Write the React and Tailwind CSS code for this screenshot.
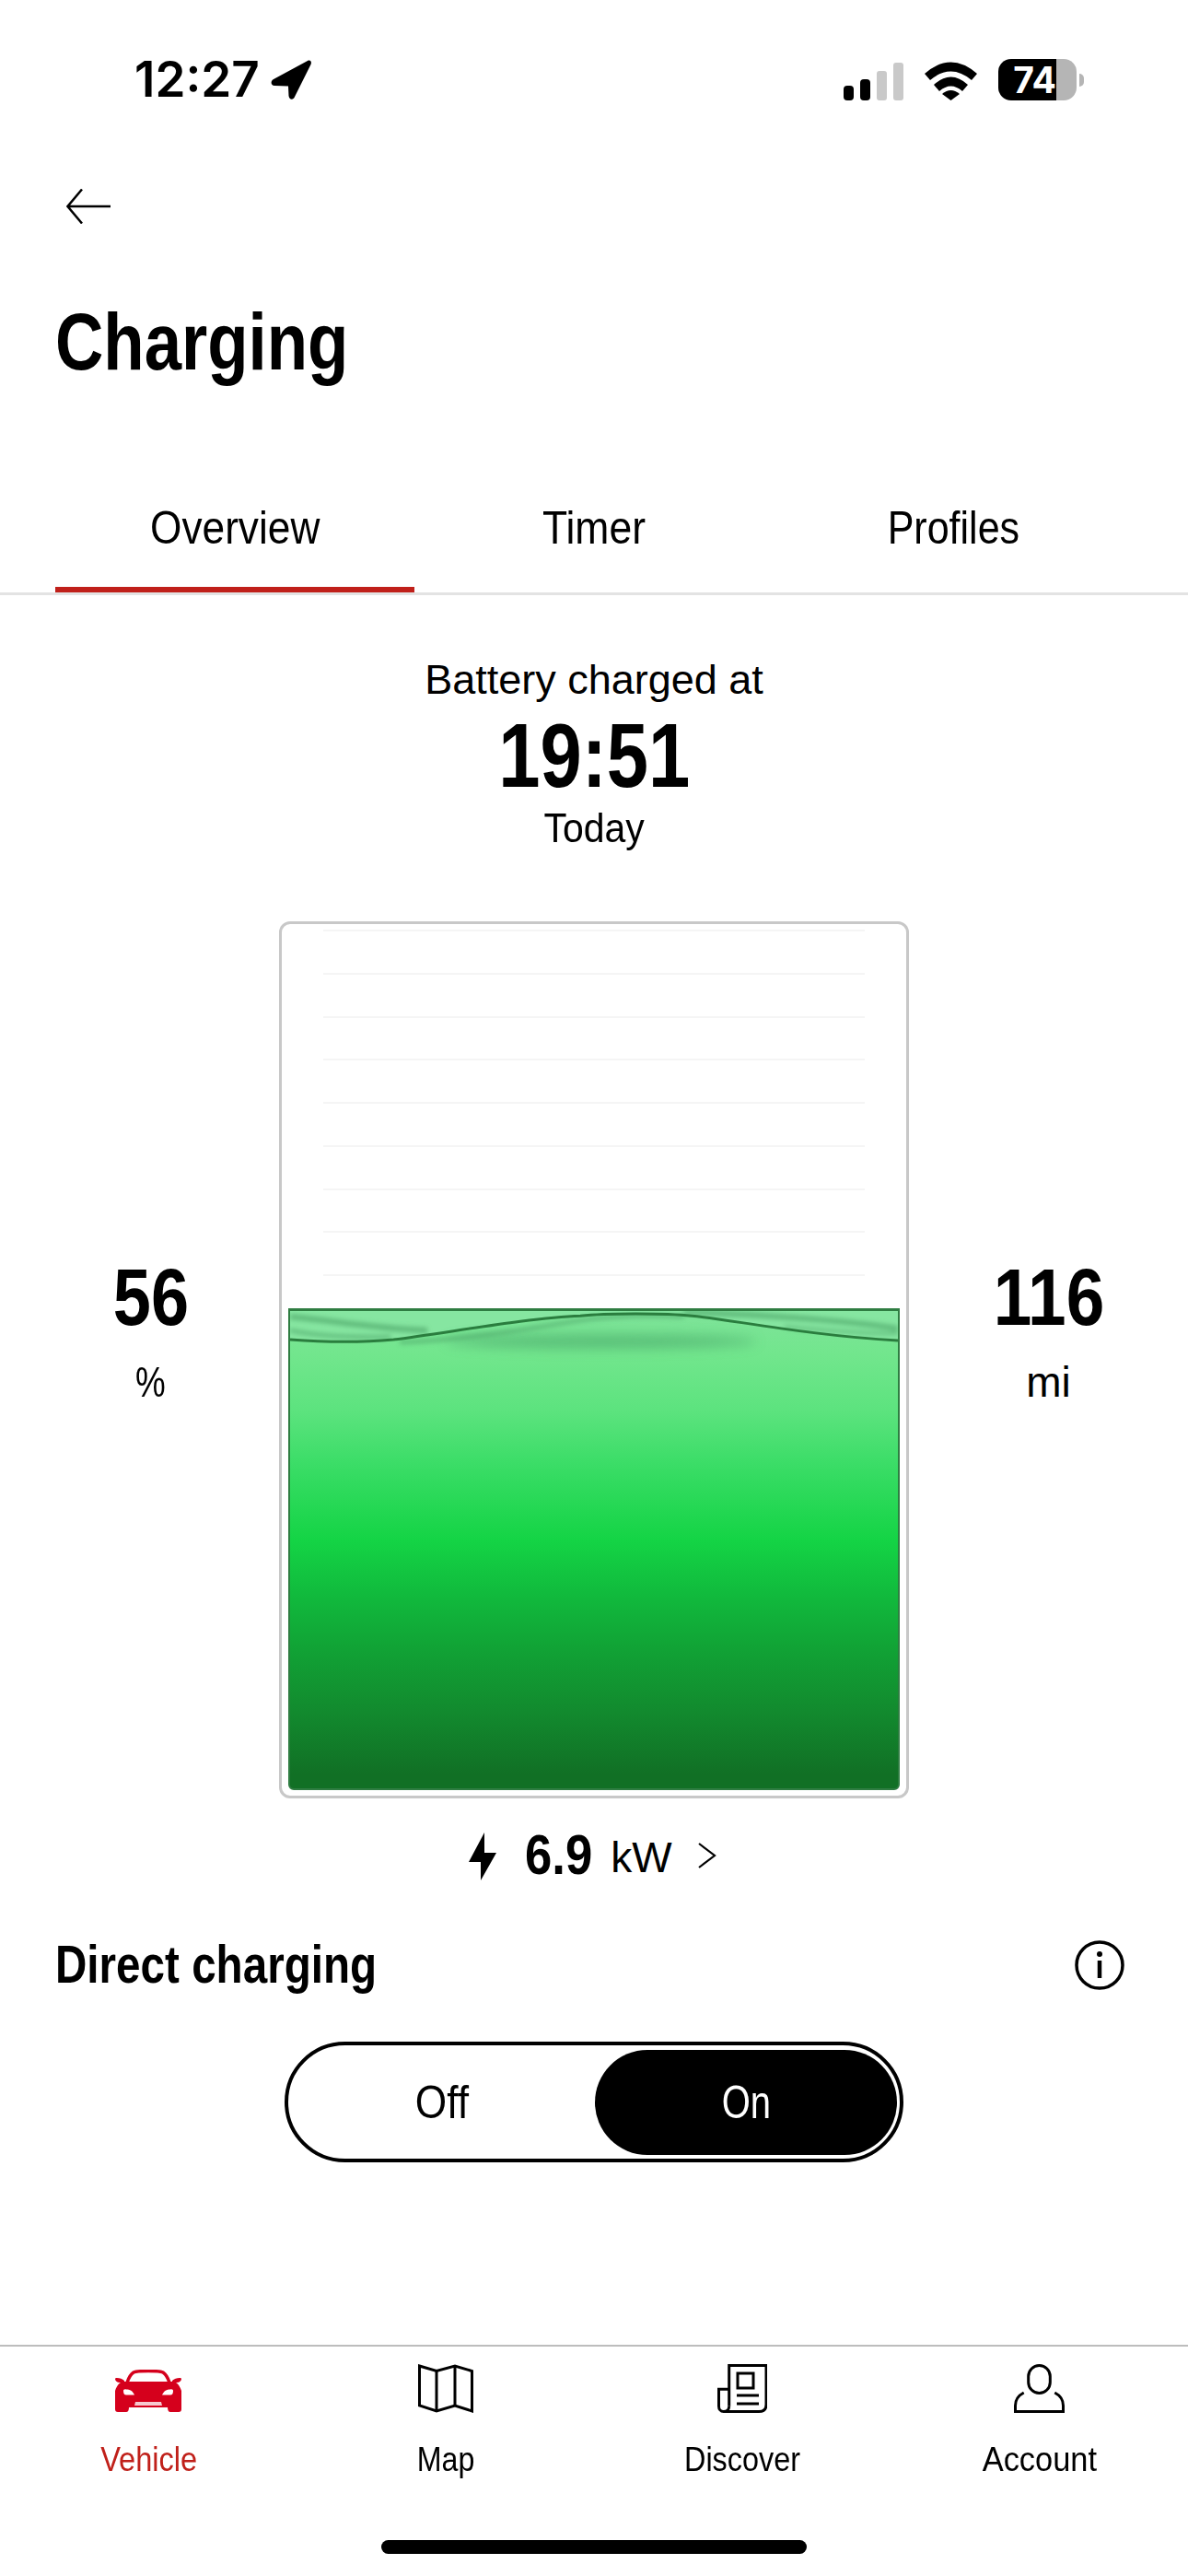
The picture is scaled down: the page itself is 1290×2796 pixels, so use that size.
const tabs = [
  { label: 'Overview', textClass: 'scale-x-[0.885]', border: 'border-[#c0201a]' },
  { label: 'Timer', textClass: 'scale-x-[0.89]', border: 'border-transparent' },
  { label: 'Profiles', textClass: 'scale-x-[0.86]', border: 'border-transparent' },
];

const batteryLines = [0, 1, 2, 3, 4, 5, 6, 7, 8];

function NavArrow() {
  return (
    <svg width="44" height="43" viewBox="0 0 44 43">
      <path d="M40 1 3 21C-1 23.500 .5 28 4 28L19 28.500 19.500 39C20 43.500 24.500 44 26 40L43.500 5C44.800 2 43 -.5 40 1Z" fill="#000" />
    </svg>
  );
}

function Signal() {
  return (
    <svg width="65" height="41" viewBox="0 0 65 41">
      <rect x="0" y="25" width="11" height="16" rx="4" fill="#000" />
      <rect x="18" y="18" width="11" height="23" rx="4" fill="#000" />
      <rect x="36" y="9" width="11" height="32" rx="3" fill="#c9c9c9" />
      <rect x="54" y="0" width="11" height="41" rx="3" fill="#c9c9c9" />
    </svg>
  );
}

function Wifi() {
  return (
    <svg width="57" height="42" viewBox="0 0 57 42">
      <path d="M0 13Q28.500-12 57 13L51 20Q28.500 1 6 20Z" fill="#000" />
      <path d="M10 25Q28.500 8 47 25L41 32Q28.500 21 16 32Z" fill="#000" />
      <path d="M19 35Q28.500 27 38 35L28.500 42Z" fill="#000" />
    </svg>
  );
}

function StatusBar() {
  return (
    <div className="flex h-[205px] items-start justify-between pl-[146px] pr-[113px] pt-[64px]">
      <div className="flex h-[45px] items-center gap-[12px]">
        <span className="font-['Inter',sans-serif] text-[53px] font-semibold leading-[45px]">12:27</span>
        <NavArrow />
      </div>
      <div className="flex h-[45px] items-end">
        <Signal />
        <div className="ml-[23px]">
          <Wifi />
        </div>
        <div className="ml-[23px] flex items-center self-start">
          <div className="flex h-[45px] w-[85px] overflow-hidden rounded-[14px]">
            <div className="flex w-[63px] items-center justify-end bg-black font-['Inter',sans-serif] text-[39px] font-bold leading-none text-white">
              74
            </div>
            <div className="flex-1 bg-[#b5b5b5]" />
          </div>
          <div className="ml-[3px] h-[14px] w-[5px] rounded-r-full bg-[#b5b5b5]" />
        </div>
      </div>
    </div>
  );
}

function Tabs() {
  return (
    <div className="mt-[133px] border-b-[3px] border-[#e3e3e3] px-[60px]">
      <div className="grid grid-cols-3">
        {tabs.map((tab) => (
          <div key={tab.label} className={`h-[95px] border-b-[6px] text-center text-[50px] leading-[50px] ${tab.border}`}>
            <span className={`inline-block ${tab.textClass}`}>{tab.label}</span>
          </div>
        ))}
      </div>
    </div>
  );
}

function Wave() {
  return (
    <svg className="absolute -top-[3px] left-0" width="660" height="70" viewBox="0 0 664 70">
      <defs>
        <filter id="soft" filterUnits="userSpaceOnUse" x="-20" y="-20" width="704" height="110">
          <feGaussianBlur stdDeviation="2.500" />
        </filter>
        <filter id="softer" filterUnits="userSpaceOnUse" x="-20" y="-20" width="704" height="110">
          <feGaussianBlur stdDeviation="7" />
        </filter>
      </defs>
      <path d="M0 0H664V35C570 30 480 12 439 8C410 5 345 5 317 8C260 10 170 27 113 34C80 37 40 37 0 34Z" fill="#86e6a1" />
      <ellipse cx="340" cy="36" rx="170" ry="7" fill="#4aa86a" filter="url(#softer)" opacity="0.7" />
      <g fill="none" filter="url(#soft)" stroke="#4fa86b" opacity="0.7">
        <path d="M0 9C40 12 90 22 150 24" strokeWidth="6" />
        <path d="M0 24C30 30 70 32 110 31" strokeWidth="4" />
        <path d="M120 37C190 34 250 24 310 14C350 8 390 7 430 9" strokeWidth="4" />
        <path d="M430 4C500 6 600 12 664 22" strokeWidth="6" />
        <path d="M540 20C580 24 630 28 664 27" strokeWidth="3" />
      </g>
      <path d="M0 34C40 37 80 37 113 34C170 27 260 10 317 8C345 5 410 5 439 8C480 12 570 30 664 35" fill="none" stroke="#2a7d3e" strokeWidth="3" />
    </svg>
  );
}

function Battery() {
  return (
    <div className="flex h-[952px] w-[684px] flex-col rounded-[12px] border-[3px] border-[#c8c8c8] px-[7px] pb-[6px] pt-[6px]">
      <div className="flex flex-col gap-[44.75px] px-[38px]">
        {batteryLines.map((line) => (
          <div key={line} className="h-[2px] bg-[#f5f5f5]" />
        ))}
      </div>
      <div className="relative mt-auto h-[523px] overflow-hidden rounded-b-[6px] border-x-2 border-b-2 border-t-[3px] border-[#2f7d42] bg-[linear-gradient(180deg,#7fe39a_0%,#72e68d_9%,#5ce37e_21%,#3bdd67_32%,#14d445_48%,#11bb3d_59%,#11a235_71%,#128a2e_84%,#117025_97%)]">
        <Wave />
      </div>
    </div>
  );
}

function Car() {
  return (
    <svg className="mt-[5px]" width="72" height="46" viewBox="0 0 72 46">
      <path d="M13 14C15 8 17 5 20 3C23 1.500 27 1.500 36 1.500C45 1.500 49 1.500 52 3C55 5 57 8 59 14" fill="none" stroke="#d5001c" strokeWidth="3.500" />
      <path d="M10 13H62C67 13 70 17 72 23V43C72 45 71 46 69 46H60C58 46 57 44 57 41H15C15 44 14 46 12 46H3C1 46 0 45 0 43V23C2 17 5 13 10 13Z" fill="#d5001c" />
      <path d="M0 10C0 9 1 9 2 9C5 9 8 10 10 12V14H5C2 14 0 12 0 10ZM72 10C72 9 71 9 70 9C67 9 64 10 62 12V14H67C70 14 72 12 72 10Z" fill="#d5001c" />
      <path d="M9 23C9 22 10 21 12 21.500C16 21.500 19 23 21 27.500H12C10 27.500 9 26 9 23ZM63 23C63 22 62 21 60 21.500C56 21.500 53 23 51 27.500H60C62 27.500 63 26 63 23Z" fill="#fff" />
      <path d="M22 35H50L51 39H21Z" fill="#f6c9cf" />
    </svg>
  );
}

function MapIcon() {
  return (
    <svg width="60" height="53" viewBox="0 0 60 53" fill="none" stroke="#000" strokeWidth="3">
      <path d="M1.500 2 20 7.500 40 2 58.500 7.500V51L40 45 20 51 1.500 45Z" />
      <path d="M20 7.500V51M40 2V45" />
    </svg>
  );
}

function Discover() {
  return (
    <svg width="54" height="53" viewBox="0 0 54 53" fill="none" stroke="#000" strokeWidth="3">
      <path d="M12.700 45.700V1.500H53V44C53 49 50 51.500 45 51.500H6.700" />
      <path d="M12.700 27.300H1.500V45.700C1.500 49 3.500 51.500 6.700 51.500C10 51.500 12.700 49 12.700 45.700" />
      <rect x="22" y="10" width="17" height="16" />
      <path d="M21 34H45M21 43H45" />
    </svg>
  );
}

function Account() {
  return (
    <svg width="55" height="53" viewBox="0 0 55 53" fill="none" stroke="#000" strokeWidth="3">
      <rect x="15.700" y="1.500" width="23.600" height="30" rx="11.800" />
      <path d="M10.700 31C5 34 1.500 39 1.500 45V51.500H53.500V45C53.500 39 50 34 44.300 31" />
    </svg>
  );
}

const navItems = [
  { label: 'Vehicle', Icon: Car, textClass: 'scale-x-[0.88] text-[#c0201a]' },
  { label: 'Map', Icon: MapIcon, textClass: 'scale-x-[0.87] text-black' },
  { label: 'Discover', Icon: Discover, textClass: 'scale-x-[0.875] text-black' },
  { label: 'Account', Icon: Account, textClass: 'scale-x-[0.93] text-black' },
];

function BottomNav() {
  return (
    <div className="mt-[198px] grid grid-cols-4 border-t-2 border-[#bdbdbd] pt-[19px]">
      {navItems.map(({ label, Icon, textClass }) => (
        <div key={label} className="flex flex-col items-center">
          <div className="flex h-[53px] items-center">
            <Icon />
          </div>
          <span className={`mt-[32px] inline-block text-[37px] leading-[37px] ${textClass}`}>{label}</span>
        </div>
      ))}
    </div>
  );
}

export default function App() {
  return (
    <div className="h-[2796px] w-[1290px] overflow-hidden bg-white font-['Liberation_Sans',sans-serif] text-black">
      <StatusBar />

      <svg className="ml-[72px] block" width="48" height="38" viewBox="0 0 48 38" fill="none" stroke="#000" strokeWidth="2.500">
        <path d="M17 0.500 1.500 19 17 37.500M1.500 19H48" />
      </svg>

      <h1 className="ml-[60px] mt-[84px] origin-left scale-x-[0.824] text-[88px] font-bold leading-[88px]">Charging</h1>

      <Tabs />

      <div className="mt-[69px] flex flex-col items-center">
        <div className="text-[45px] leading-[45px]">Battery charged at</div>
        <div className="mt-[11px] scale-x-[0.83] text-[98px] font-bold leading-[98px]">19:51</div>
        <div className="mt-[7px] scale-x-[0.91] text-[45px] leading-[45px]">Today</div>
      </div>

      <div className="mt-[79px] flex">
        <div className="flex w-[303px] flex-col items-center pl-[24px] pt-[364px]">
          <div className="scale-x-[0.84] text-[88px] font-bold leading-[88px]">56</div>
          <div className="mt-[25px] scale-x-[0.8] text-[46px] leading-[46px]">%</div>
        </div>
        <Battery />
        <div className="flex w-[303px] flex-col items-center pt-[364px]">
          <div className="scale-x-[0.85] text-[88px] font-bold leading-[88px]">116</div>
          <div className="mt-[25px] text-[46px] leading-[46px]">mi</div>
        </div>
      </div>

      <div className="mt-[30px] flex h-[62px] items-center pl-[508px]">
        <svg className="mt-[4px]" width="32" height="52" viewBox="0 0 32 52">
          <path d="M18 0 1 32H14V52L31 22H18Z" fill="#000" />
        </svg>
        <span className="ml-[30px] origin-left scale-x-[0.85] text-[62px] font-bold leading-[62px]">6.9</span>
        <span className="ml-[7px] mt-[5px] text-[46px] leading-[46px]">kW</span>
        <svg className="ml-[27px] mt-[2px]" width="21" height="28" viewBox="0 0 21 28" fill="none" stroke="#000" strokeWidth="2.200">
          <path d="M2 1 19 14 2 27" />
        </svg>
      </div>

      <div className="mt-[60px] flex items-center justify-between pl-[60px] pr-[69px]">
        <div className="origin-left scale-x-[0.835] text-[57px] font-bold leading-[57px]">Direct charging</div>
        <svg width="54" height="54" viewBox="0 0 54 54" fill="none" stroke="#000" strokeWidth="3.500">
          <circle cx="27" cy="27" r="25" />
          <circle cx="27" cy="15" r="3" fill="#000" stroke="none" />
          <path d="M27 22V41" strokeWidth="4.500" />
        </svg>
      </div>

      <div className="mx-auto mt-[55px] flex h-[131px] w-[672px] rounded-full border-4 border-black pb-[4px] pr-[3px] pt-[5px]">
        <div className="flex flex-1 items-center justify-center text-[50px]">
          <span className="inline-block scale-x-[0.885]">Off</span>
        </div>
        <div className="flex w-[328px] items-center justify-center rounded-full bg-black text-[50px] text-white">
          <span className="inline-block scale-x-[0.8]">On</span>
        </div>
      </div>

      <BottomNav />

      <div className="mx-auto mt-[69px] h-[15px] w-[462px] rounded-full bg-black" />
    </div>
  );
}
